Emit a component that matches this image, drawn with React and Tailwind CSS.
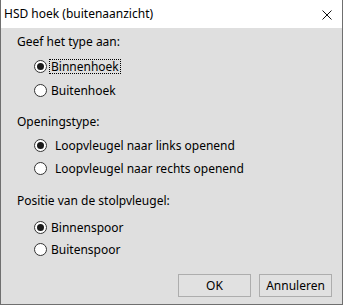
import { useState } from 'react';

function Radio({ label, checked, focused, onSelect, labelClass = 'ml-[4px]' }) {
  return (
    <div className="flex items-center h-full cursor-default" onClick={onSelect}>
      <span className="w-[13px] h-[13px] rounded-full border border-[#333333] bg-white flex items-center justify-center">
        {checked && <span className="w-[7px] h-[7px] rounded-full bg-[#1b1b1b]" />}
      </span>
      <span
        className={`${labelClass} leading-[13px] ${
          focused ? 'border border-dotted border-black px-[1px]' : 'border border-transparent px-[1px]'
        }`}
      >
        {label}
      </span>
    </div>
  );
}

export default function App() {
  const [hoek, setHoek] = useState('binnen');
  const [opening, setOpening] = useState('links');
  const [spoor, setSpoor] = useState('binnen');

  return (
    <div
      className="w-[343px] h-[305px] flex flex-col border-x border-b border-[#6f6f6f] bg-[#dfdfdf] text-black text-[12px]"
      style={{ fontFamily: '"Segoe UI", "Noto Sans", sans-serif' }}
    >
      <div className="h-[28px] bg-white flex items-center justify-between pl-[3px] pr-[10px]">
        <span className="text-[12px]">HSD hoek (buitenaanzicht)</span>
        <svg width="10" height="10" viewBox="0 0 10 10" className="mt-[1px]">
          <path d="M0.5 0.5 L9.5 9.5 M9.5 0.5 L0.5 9.5" stroke="#111" strokeWidth="1" />
        </svg>
      </div>

      <div className="flex-1 flex flex-col pl-[16px]">
        <div className="h-[24px] mt-[2px] flex items-center">Geef het type aan:</div>
        <div className="pl-[17px]">
          <div className="h-[24px]">
            <Radio label="Binnenhoek" checked={hoek === 'binnen'} focused onSelect={() => setHoek('binnen')} labelClass="ml-[2px]" />
          </div>
          <div className="h-[24px]">
            <Radio label="Buitenhoek" checked={hoek === 'buiten'} onSelect={() => setHoek('buiten')} labelClass="ml-[2px]" />
          </div>
        </div>

        <div className="h-[24px] mt-[8px] flex items-center">Openingstype:</div>
        <div className="pl-[17px]">
          <div className="h-[23px]">
            <Radio label="Loopvleugel naar links openend" checked={opening === 'links'} onSelect={() => setOpening('links')} labelClass="ml-[6px]" />
          </div>
          <div className="h-[23px]">
            <Radio label="Loopvleugel naar rechts openend" checked={opening === 'rechts'} onSelect={() => setOpening('rechts')} labelClass="ml-[6px]" />
          </div>
        </div>

        <div className="h-[24px] mt-[9px] flex items-center">Positie van de stolpvleugel:</div>
        <div className="pl-[17px] mt-[3px]">
          <div className="h-[22px]">
            <Radio label="Binnenspoor" checked={spoor === 'binnen'} onSelect={() => setSpoor('binnen')} labelClass="ml-[2px]" />
          </div>
          <div className="h-[22px]">
            <Radio label="Buitenspoor" checked={spoor === 'buiten'} onSelect={() => setSpoor('buiten')} labelClass="ml-[2px]" />
          </div>
        </div>

        <div className="flex-1" />
        <div className="flex justify-end gap-[8px] pr-[10px] pb-[7px]">
          <button className="w-[73px] h-[23px] border border-[#adadad] bg-[#e1e1e1] text-[12px]">OK</button>
          <button className="w-[73px] h-[23px] border border-[#adadad] bg-[#e1e1e1] text-[12px]">Annuleren</button>
        </div>
      </div>
    </div>
  );
}
